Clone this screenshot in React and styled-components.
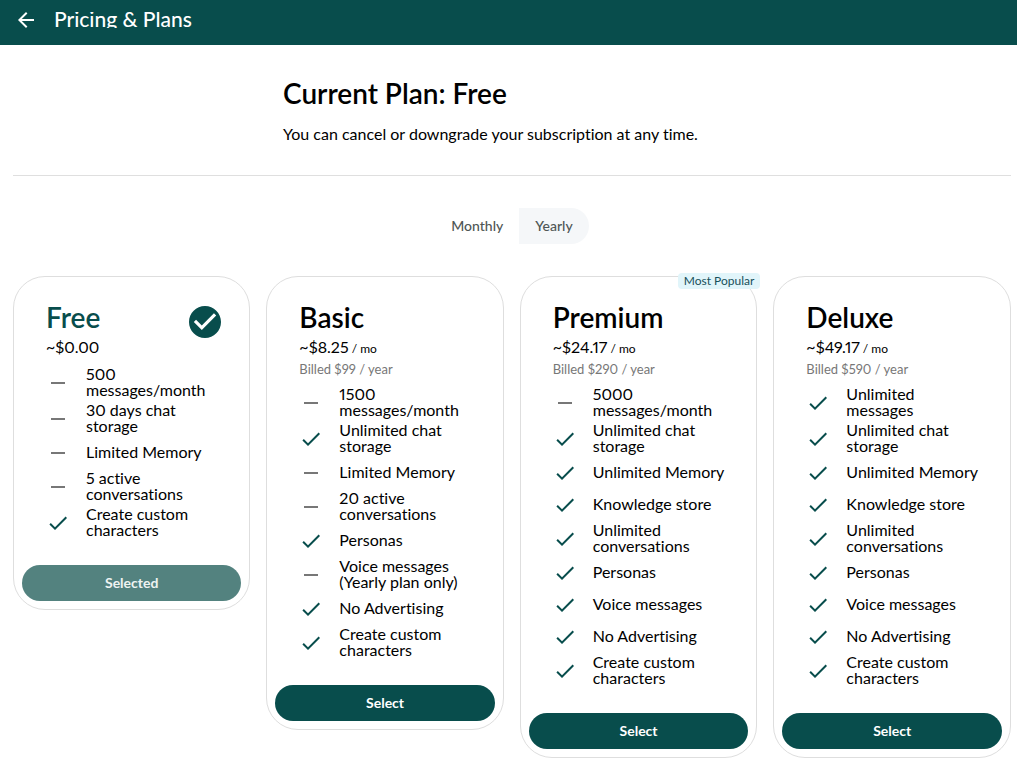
import React, { useState } from "react";
import styled, { createGlobalStyle } from "styled-components";

const teal = "#084d4c";

const GlobalStyle = createGlobalStyle`
  * { box-sizing: border-box; }
  body {
    margin: 0;
    background: #fff;
    color: #000;
    font-family: Lato, "Noto Sans", sans-serif;
    font-size: 16px;
    font-variant-ligatures: none;
    font-variant-numeric: proportional-nums;
  }
  h1, h2, p, ul { margin: 0; padding: 0; }
  button { font-family: inherit; cursor: pointer; }
`;

const TopBar = styled.header`
  display: flex;
  align-items: center;
  gap: 16px;
  height: 45px;
  padding: 0 14px 5px;
  background: ${teal};
  color: #fff;
`;

const BackButton = styled.button`
  display: flex;
  padding: 0;
  border: 0;
  background: none;
  color: inherit;
`;

const TopTitle = styled.h1`
  overflow: hidden;
  padding-bottom: 2px;
  font-size: 21px;
  font-weight: 500;
  line-height: 14px;
`;

const Page = styled.main`
  padding: 0 6px 0 13px;
`;

const Intro = styled.section`
  padding: 28px 0;
  border-bottom: 1px solid #dfdfdf;
`;

const IntroText = styled.div`
  max-width: 458px;
  margin: 0 auto;
`;

const Heading = styled.h2`
  margin-bottom: 8px;
  font-size: 28px;
  font-weight: 600;
  line-height: 40px;
`;

const Lead = styled.p`
  line-height: 26px;
  white-space: nowrap;
`;

const Toggle = styled.div`
  display: flex;
  justify-content: center;
  margin: 32px 0;
`;

const ToggleButton = styled.button`
  height: 36px;
  padding: 0 16px 2px;
  border: 0;
  border-radius: ${(p) => (p.$side === "left" ? "18px 0 0 18px" : "0 18px 18px 0")};
  background: ${(p) => (p.$active ? "#f5f7f9" : "transparent")};
  color: #4f5655;
  font-size: 14px;
  font-weight: 500;
`;

const Plans = styled.div`
  display: grid;
  grid-template-columns: repeat(4, 1fr);
  align-items: start;
  gap: 16px;
`;

const Card = styled.article`
  position: relative;
  padding: 24px 8px 8px;
  border: 1px solid #dedede;
  border-radius: 32px;
`;

const Badge = styled.span`
  position: absolute;
  top: -4px;
  right: -4px;
  padding: 0 6px;
  border-radius: 4px;
  background: #e1f5fa;
  color: #17505a;
  font-size: 12px;
  line-height: 16px;
`;

const CardBody = styled.div`
  padding: 0 24px;
`;

const TitleRow = styled.div`
  display: flex;
  justify-content: space-between;
  height: 34px;
`;

const PlanName = styled.h2`
  color: ${(p) => (p.$current ? teal : "#000")};
  font-size: 28px;
  font-weight: 600;
  line-height: 32px;
`;

const CurrentMark = styled.svg`
  width: 32px;
  height: 32px;
  margin: 5px -4px 0 0;
  fill: ${teal};
`;

const Price = styled.p`
  line-height: 24px;
`;

const Per = styled.span`
  font-size: 12px;
  line-height: 16px;
`;

const Billed = styled.p`
  color: #777;
  font-size: 13px;
  line-height: 20px;
`;

const Features = styled.ul`
  margin: 6px 0 24px;
  list-style: none;
`;

const Feature = styled.li`
  display: flex;
  align-items: center;
  gap: 16px;
  min-height: 32px;
  padding: 1px 0;
`;

const FeatureText = styled.span`
  padding-bottom: 2px;
  line-height: 16px;
  white-space: pre;
`;

const FeatureIcon = styled.svg`
  flex: none;
  width: 24px;
  height: 24px;
  fill: ${(p) => (p.$included ? teal : "#777")};
`;

const PlanButton = styled.button`
  display: block;
  width: 100%;
  height: 36px;
  padding: 0 16px 2px;
  border: 0;
  border-radius: 18px;
  background: ${teal};
  color: #fff;
  font-size: 14px;
  font-weight: 700;

  &:disabled {
    background: #53827f;
    color: #eef3f2;
  }
`;

const CHECK = "M9 16.17 4.83 12l-1.42 1.41L9 19 21 7l-1.41-1.41z";
const DASH = "M19 13H5v-2h14z";

const plans = [
  {
    name: "Free",
    price: "~$0.00",
    current: true,
    features: [
      [false, "500\nmessages/month"],
      [false, "30 days chat\nstorage"],
      [false, "Limited Memory"],
      [false, "5 active\nconversations"],
      [true, "Create custom\ncharacters"],
    ],
  },
  {
    name: "Basic",
    price: "~$8.25",
    billed: "Billed $99 / year",
    features: [
      [false, "1500\nmessages/month"],
      [true, "Unlimited chat\nstorage"],
      [false, "Limited Memory"],
      [false, "20 active\nconversations"],
      [true, "Personas"],
      [false, "Voice messages\n(Yearly plan only)"],
      [true, "No Advertising"],
      [true, "Create custom\ncharacters"],
    ],
  },
  {
    name: "Premium",
    price: "~$24.17",
    billed: "Billed $290 / year",
    badge: "Most Popular",
    features: [
      [false, "5000\nmessages/month"],
      [true, "Unlimited chat\nstorage"],
      [true, "Unlimited Memory"],
      [true, "Knowledge store"],
      [true, "Unlimited\nconversations"],
      [true, "Personas"],
      [true, "Voice messages"],
      [true, "No Advertising"],
      [true, "Create custom\ncharacters"],
    ],
  },
  {
    name: "Deluxe",
    price: "~$49.17",
    billed: "Billed $590 / year",
    features: [
      [true, "Unlimited\nmessages"],
      [true, "Unlimited chat\nstorage"],
      [true, "Unlimited Memory"],
      [true, "Knowledge store"],
      [true, "Unlimited\nconversations"],
      [true, "Personas"],
      [true, "Voice messages"],
      [true, "No Advertising"],
      [true, "Create custom\ncharacters"],
    ],
  },
];

function PlanCard({ plan }) {
  return (
    <Card>
      {plan.badge && <Badge>{plan.badge}</Badge>}
      <CardBody>
        <TitleRow>
          <PlanName $current={plan.current}>{plan.name}</PlanName>
          {plan.current && (
            <CurrentMark viewBox="2 2 20 20" aria-hidden="true">
              <path d="M12 2C6.48 2 2 6.48 2 12s4.48 10 10 10 10-4.48 10-10S17.52 2 12 2zm-2 15-5-5 1.41-1.41L10 14.17l7.59-7.59L19 8l-9 9z" />
            </CurrentMark>
          )}
        </TitleRow>
        <Price>
          {plan.price}
          {plan.billed && <Per> / mo</Per>}
        </Price>
        {plan.billed && <Billed>{plan.billed}</Billed>}
        <Features>
          {plan.features.map(([included, text]) => (
            <Feature key={text}>
              <FeatureIcon viewBox="0 0 24 24" $included={included} aria-hidden="true">
                <path d={included ? CHECK : DASH} />
              </FeatureIcon>
              <FeatureText>{text}</FeatureText>
            </Feature>
          ))}
        </Features>
      </CardBody>
      <PlanButton type="button" disabled={plan.current}>
        {plan.current ? "Selected" : "Select"}
      </PlanButton>
    </Card>
  );
}

export default function App() {
  const [period, setPeriod] = useState("yearly");
  return (
    <>
      <GlobalStyle />
      <TopBar>
        <BackButton type="button" aria-label="Back">
          <svg width="24" height="24" viewBox="0 0 24 24" fill="currentColor" aria-hidden="true">
            <path d="M20 11H7.83l5.59-5.59L12 4l-8 8 8 8 1.41-1.41L7.83 13H20v-2z" />
          </svg>
        </BackButton>
        <TopTitle>Pricing &amp; Plans</TopTitle>
      </TopBar>
      <Page>
        <Intro>
          <IntroText>
            <Heading>Current Plan: Free</Heading>
            <Lead>You can cancel or downgrade your subscription at any time.</Lead>
          </IntroText>
        </Intro>
        <Toggle role="group" aria-label="Billing period">
          <ToggleButton
            type="button"
            $side="left"
            $active={period === "monthly"}
            aria-pressed={period === "monthly"}
            onClick={() => setPeriod("monthly")}
          >
            Monthly
          </ToggleButton>
          <ToggleButton
            type="button"
            $side="right"
            $active={period === "yearly"}
            aria-pressed={period === "yearly"}
            onClick={() => setPeriod("yearly")}
          >
            Yearly
          </ToggleButton>
        </Toggle>
        <Plans>
          {plans.map((plan) => (
            <PlanCard key={plan.name} plan={plan} />
          ))}
        </Plans>
      </Page>
    </>
  );
}
